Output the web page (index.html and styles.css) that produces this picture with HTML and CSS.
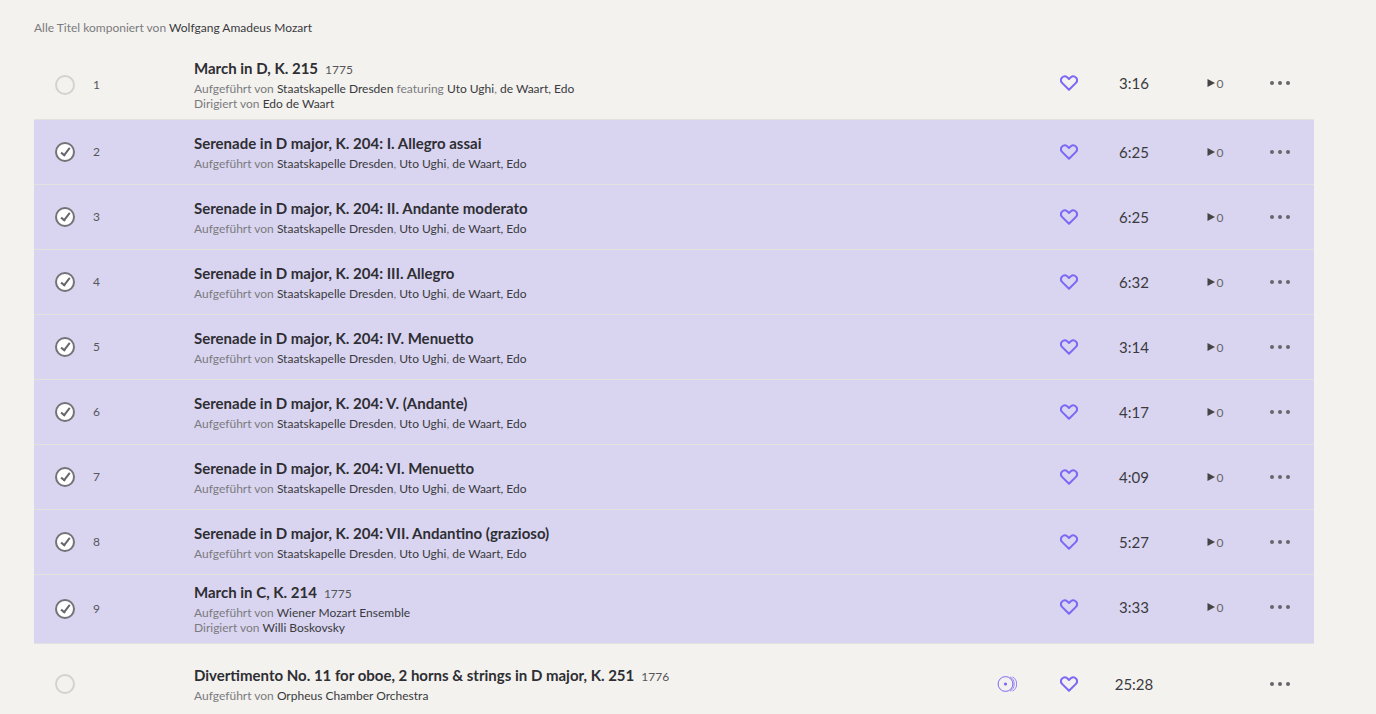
FILE: index.html
```html
<!DOCTYPE html>
<html lang="de">
<head>
  <title>Wolfgang Amadeus Mozart — Titel</title>
  <meta charset="utf-8">
  <meta name="viewport" content="width=device-width, initial-scale=1">
  <link rel="stylesheet" href="styles.css">
</head>
<body>
  <svg class="sprite" width="0" height="0" aria-hidden="true">
    <symbol id="heart" viewBox="0 0 18 16">
      <path d="M9 14.800 2.300 8.100C.7 6.500.6 4.200 2 2.600 3.400 1.200 5.600 1 7.200 2.200L9 3.900l1.800-1.700C12.400 1 14.600 1.200 16 2.600c1.400 1.600 1.300 3.900-.3 5.500Z" fill="none" stroke="#7B68F5" stroke-width="2" stroke-linejoin="round"/>
    </symbol>
    <symbol id="disc" viewBox="0 0 20 16">
      <g fill="none" stroke="#7B68F5" stroke-width="1">
        <circle cx="8.500" cy="8" r="7.400"/>
        <path d="M13 .800a8.300 8.300 0 0 1 0 14.400M15.500.800a8.300 8.300 0 0 1 0 14.400" stroke-width=".8"/>
      </g>
      <circle cx="8.500" cy="8" r="1.600" fill="#7B68F5"/>
    </symbol>
    <symbol id="dots" viewBox="0 0 20 4">
      <g fill="#66666A"><circle cx="2" cy="2" r="2"/><circle cx="10" cy="2" r="2"/><circle cx="18" cy="2" r="2"/></g>
    </symbol>
    <symbol id="play" viewBox="0 0 8 8">
      <path d="M.500 0 8 4 .500 8Z" fill="#444444"/>
    </symbol>
  </svg>
  <main class="page">
    <p class="intro">Alle Titel komponiert von <a href="#">Wolfgang Amadeus Mozart</a></p>
    <table class="tracks">
      <colgroup>
        <col class="col-check">
        <col class="col-number">
        <col>
        <col class="col-disc">
        <col class="col-heart">
        <col class="col-time">
        <col class="col-plays">
        <col class="col-more">
      </colgroup>
      <tbody>
        <tr class="track">
          <td class="track__check"><input class="check" type="checkbox" aria-label="March in D, K. 215"></td>
          <td class="track__number">1</td>
          <td class="track__info">
            <div class="title"><a href="#">March in D, K. 215</a><span class="year">1775</span></div>
            <div class="credits">Aufgeführt von <a href="#">Staatskapelle Dresden</a> featuring <a href="#">Uto Ughi</a>, <a href="#">de Waart, Edo</a></div>
            <div class="credits">Dirigiert von <a href="#">Edo de Waart</a></div>
          </td>
          <td></td>
          <td class="track__cell"><button class="icon-button" aria-label="Favorit"><svg width="18" height="16"><use href="#heart"/></svg></button></td>
          <td class="track__cell track__time"><span class="cell-box">3:16</span></td>
          <td class="track__cell track__plays"><span class="cell-box"><svg width="8" height="8"><use href="#play"/></svg>0</span></td>
          <td class="track__cell track__more"><button class="icon-button" aria-label="Mehr"><svg width="20" height="4"><use href="#dots"/></svg></button></td>
        </tr>
        <tr class="track track--selected">
          <td class="track__check"><input class="check" type="checkbox" aria-label="I. Allegro assai" checked></td>
          <td class="track__number">2</td>
          <td class="track__info">
            <div class="title"><a href="#">Serenade in D major, K. 204: I. Allegro assai</a></div>
            <div class="credits">Aufgeführt von <a href="#">Staatskapelle Dresden</a>, <a href="#">Uto Ughi</a>, <a href="#">de Waart, Edo</a></div>
          </td>
          <td></td>
          <td class="track__cell"><button class="icon-button" aria-label="Favorit"><svg width="18" height="16"><use href="#heart"/></svg></button></td>
          <td class="track__cell track__time"><span class="cell-box">6:25</span></td>
          <td class="track__cell track__plays"><span class="cell-box"><svg width="8" height="8"><use href="#play"/></svg>0</span></td>
          <td class="track__cell track__more"><button class="icon-button" aria-label="Mehr"><svg width="20" height="4"><use href="#dots"/></svg></button></td>
        </tr>
        <tr class="track track--selected">
          <td class="track__check"><input class="check" type="checkbox" aria-label="II. Andante moderato" checked></td>
          <td class="track__number">3</td>
          <td class="track__info">
            <div class="title"><a href="#">Serenade in D major, K. 204: II. Andante moderato</a></div>
            <div class="credits">Aufgeführt von <a href="#">Staatskapelle Dresden</a>, <a href="#">Uto Ughi</a>, <a href="#">de Waart, Edo</a></div>
          </td>
          <td></td>
          <td class="track__cell"><button class="icon-button" aria-label="Favorit"><svg width="18" height="16"><use href="#heart"/></svg></button></td>
          <td class="track__cell track__time"><span class="cell-box">6:25</span></td>
          <td class="track__cell track__plays"><span class="cell-box"><svg width="8" height="8"><use href="#play"/></svg>0</span></td>
          <td class="track__cell track__more"><button class="icon-button" aria-label="Mehr"><svg width="20" height="4"><use href="#dots"/></svg></button></td>
        </tr>
        <tr class="track track--selected">
          <td class="track__check"><input class="check" type="checkbox" aria-label="III. Allegro" checked></td>
          <td class="track__number">4</td>
          <td class="track__info">
            <div class="title"><a href="#">Serenade in D major, K. 204: III. Allegro</a></div>
            <div class="credits">Aufgeführt von <a href="#">Staatskapelle Dresden</a>, <a href="#">Uto Ughi</a>, <a href="#">de Waart, Edo</a></div>
          </td>
          <td></td>
          <td class="track__cell"><button class="icon-button" aria-label="Favorit"><svg width="18" height="16"><use href="#heart"/></svg></button></td>
          <td class="track__cell track__time"><span class="cell-box">6:32</span></td>
          <td class="track__cell track__plays"><span class="cell-box"><svg width="8" height="8"><use href="#play"/></svg>0</span></td>
          <td class="track__cell track__more"><button class="icon-button" aria-label="Mehr"><svg width="20" height="4"><use href="#dots"/></svg></button></td>
        </tr>
        <tr class="track track--selected">
          <td class="track__check"><input class="check" type="checkbox" aria-label="IV. Menuetto" checked></td>
          <td class="track__number">5</td>
          <td class="track__info">
            <div class="title"><a href="#">Serenade in D major, K. 204: IV. Menuetto</a></div>
            <div class="credits">Aufgeführt von <a href="#">Staatskapelle Dresden</a>, <a href="#">Uto Ughi</a>, <a href="#">de Waart, Edo</a></div>
          </td>
          <td></td>
          <td class="track__cell"><button class="icon-button" aria-label="Favorit"><svg width="18" height="16"><use href="#heart"/></svg></button></td>
          <td class="track__cell track__time"><span class="cell-box">3:14</span></td>
          <td class="track__cell track__plays"><span class="cell-box"><svg width="8" height="8"><use href="#play"/></svg>0</span></td>
          <td class="track__cell track__more"><button class="icon-button" aria-label="Mehr"><svg width="20" height="4"><use href="#dots"/></svg></button></td>
        </tr>
        <tr class="track track--selected">
          <td class="track__check"><input class="check" type="checkbox" aria-label="V. (Andante)" checked></td>
          <td class="track__number">6</td>
          <td class="track__info">
            <div class="title"><a href="#">Serenade in D major, K. 204: V. (Andante)</a></div>
            <div class="credits">Aufgeführt von <a href="#">Staatskapelle Dresden</a>, <a href="#">Uto Ughi</a>, <a href="#">de Waart, Edo</a></div>
          </td>
          <td></td>
          <td class="track__cell"><button class="icon-button" aria-label="Favorit"><svg width="18" height="16"><use href="#heart"/></svg></button></td>
          <td class="track__cell track__time"><span class="cell-box">4:17</span></td>
          <td class="track__cell track__plays"><span class="cell-box"><svg width="8" height="8"><use href="#play"/></svg>0</span></td>
          <td class="track__cell track__more"><button class="icon-button" aria-label="Mehr"><svg width="20" height="4"><use href="#dots"/></svg></button></td>
        </tr>
        <tr class="track track--selected">
          <td class="track__check"><input class="check" type="checkbox" aria-label="VI. Menuetto" checked></td>
          <td class="track__number">7</td>
          <td class="track__info">
            <div class="title"><a href="#">Serenade in D major, K. 204: VI. Menuetto</a></div>
            <div class="credits">Aufgeführt von <a href="#">Staatskapelle Dresden</a>, <a href="#">Uto Ughi</a>, <a href="#">de Waart, Edo</a></div>
          </td>
          <td></td>
          <td class="track__cell"><button class="icon-button" aria-label="Favorit"><svg width="18" height="16"><use href="#heart"/></svg></button></td>
          <td class="track__cell track__time"><span class="cell-box">4:09</span></td>
          <td class="track__cell track__plays"><span class="cell-box"><svg width="8" height="8"><use href="#play"/></svg>0</span></td>
          <td class="track__cell track__more"><button class="icon-button" aria-label="Mehr"><svg width="20" height="4"><use href="#dots"/></svg></button></td>
        </tr>
        <tr class="track track--selected">
          <td class="track__check"><input class="check" type="checkbox" aria-label="VII. Andantino (grazioso)" checked></td>
          <td class="track__number">8</td>
          <td class="track__info">
            <div class="title"><a href="#">Serenade in D major, K. 204: VII. Andantino (grazioso)</a></div>
            <div class="credits">Aufgeführt von <a href="#">Staatskapelle Dresden</a>, <a href="#">Uto Ughi</a>, <a href="#">de Waart, Edo</a></div>
          </td>
          <td></td>
          <td class="track__cell"><button class="icon-button" aria-label="Favorit"><svg width="18" height="16"><use href="#heart"/></svg></button></td>
          <td class="track__cell track__time"><span class="cell-box">5:27</span></td>
          <td class="track__cell track__plays"><span class="cell-box"><svg width="8" height="8"><use href="#play"/></svg>0</span></td>
          <td class="track__cell track__more"><button class="icon-button" aria-label="Mehr"><svg width="20" height="4"><use href="#dots"/></svg></button></td>
        </tr>
        <tr class="track track--selected">
          <td class="track__check"><input class="check" type="checkbox" aria-label="March in C, K. 214" checked></td>
          <td class="track__number">9</td>
          <td class="track__info">
            <div class="title"><a href="#">March in C, K. 214</a><span class="year">1775</span></div>
            <div class="credits">Aufgeführt von <a href="#">Wiener Mozart Ensemble</a></div>
            <div class="credits">Dirigiert von <a href="#">Willi Boskovsky</a></div>
          </td>
          <td></td>
          <td class="track__cell"><button class="icon-button" aria-label="Favorit"><svg width="18" height="16"><use href="#heart"/></svg></button></td>
          <td class="track__cell track__time"><span class="cell-box">3:33</span></td>
          <td class="track__cell track__plays"><span class="cell-box"><svg width="8" height="8"><use href="#play"/></svg>0</span></td>
          <td class="track__cell track__more"><button class="icon-button" aria-label="Mehr"><svg width="20" height="4"><use href="#dots"/></svg></button></td>
        </tr>
      </tbody>
      <tbody class="work">
        <tr class="track">
          <td class="track__check"><input class="check" type="checkbox" aria-label="Divertimento No. 11"></td>
          <td class="track__number"></td>
          <td class="track__info">
            <div class="title"><a href="#">Divertimento No. 11 for oboe, 2 horns &amp; strings in D major, K. 251</a><span class="year">1776</span></div>
            <div class="credits">Aufgeführt von <a href="#">Orpheus Chamber Orchestra</a></div>
          </td>
          <td class="track__cell"><button class="icon-button" aria-label="Aufnahmen"><svg width="20" height="16"><use href="#disc"/></svg></button></td>
          <td class="track__cell"><button class="icon-button" aria-label="Favorit"><svg width="18" height="16"><use href="#heart"/></svg></button></td>
          <td class="track__cell track__time"><span class="cell-box">25:28</span></td>
          <td></td>
          <td class="track__cell track__more"><button class="icon-button" aria-label="Mehr"><svg width="20" height="4"><use href="#dots"/></svg></button></td>
        </tr>
      </tbody>
    </table>
  </main>
</body>
</html>
```
FILE: styles.css
```css
*, *::before, *::after {
  margin: 0;
  padding: 0;
  box-sizing: border-box;
}

body {
  color: #3A3A40;
  font-size: 12px;
  font-weight: 400;
  font-family: Lato, sans-serif;
  background-color: #F3F2EE;
}

a {
  color: inherit;
  text-decoration: none;
}

a:hover {
  text-decoration: underline;
}

.sprite {
  position: absolute;
}

.page {
  padding: 20px 62px 0 34px;
}

.intro {
  margin-bottom: 16px;
  color: #7B7B7F;
  line-height: 15px;
}

.intro a, .credits a {
  color: #3A3A40;
}

.tracks {
  width: 100%;
  table-layout: fixed;
  border-collapse: separate;
  border-spacing: 0;
}

.col-check {
  width: 50px;
}

.col-number {
  width: 110px;
}

.col-disc {
  width: 66px;
}

.col-heart {
  width: 57px;
}

.col-time {
  width: 74px;
}

.col-plays {
  width: 88px;
}

.col-more {
  width: 55px;
}

.track td {
  height: 65px;
  border-bottom: 1px solid #E3E2DE;
  vertical-align: middle;
}

.track--selected {
  background-color: #D9D5F0;
}

.work .track td {
  border-top: 8px solid transparent;
  height: 73px;
}

.track .track__check {
  padding-left: 21px;
}

.track .track__number {
  padding: 0 0 2px 9px;
  color: #55555A;
}

.track .track__info {
  padding: 7px 0 8px;
}

.title {
  margin-bottom: 3px;
  color: #2E2E33;
  font-weight: 700;
  font-size: 15px;
  line-height: 20px;
}

.year {
  margin-left: 7px;
  color: #55555A;
  font-weight: 400;
  font-size: 12px;
  line-height: 1;
}

.credits {
  color: #7B7B7F;
  line-height: 15px;
}

.track .track__cell {
  vertical-align: top;
}

.track .track__more {
  padding-right: 13px;
}

.cell-box, .icon-button {
  display: flex;
  justify-content: center;
  align-items: center;
  width: 100%;
  height: 64px;
}

.icon-button {
  border: none;
  background: none;
  cursor: pointer;
}

.track__time {
  font-size: 15px;
}

.track__plays .cell-box {
  gap: 2px;
  color: #66666A;
}

.check {
  display: block;
  width: 20px;
  height: 20px;
  border: 2px solid #D3D2D0;
  border-radius: 50%;
  appearance: none;
  cursor: pointer;
}

.check:checked {
  border-color: #737378;
  background: #FFFFFF;
}

.check:checked::before {
  content: "";
  display: block;
  width: 5px;
  height: 10px;
  margin: 2px 0 0 6px;
  border: solid #66666A;
  border-width: 0 2px 2px 0;
  transform: rotate(38deg);
}
```
